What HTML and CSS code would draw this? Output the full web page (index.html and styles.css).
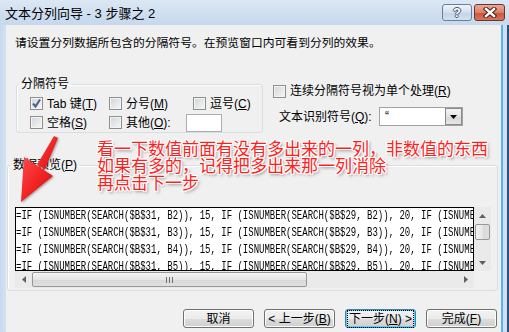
FILE: index.html
```html
<!DOCTYPE html>
<html lang="zh-CN">

<head>
    <meta charset="UTF-8">
    <meta name="viewport" content="width=device-width, initial-scale=1.0">
    <title>文本分列向导 - 3 步骤之 2</title>
    <link rel="stylesheet" href="styles.css">
</head>

<body>
    <div class="window">
        <div class="titlebar">
            <span class="title">文本分列向导 - 3 步骤之 2</span>
            <div class="caps">
                <span class="cap help">?</span>
                <span class="cap close">
                    <svg width="14" height="11" viewBox="0 0 14 11">
                        <path d="M3 2 L11 9 M11 2 L3 9" stroke="#4a1f14" stroke-width="4.4" stroke-linecap="square" />
                        <path d="M3 2 L11 9 M11 2 L3 9" stroke="#fff" stroke-width="2.4" stroke-linecap="square" />
                    </svg>
                </span>
            </div>
        </div>

        <div class="frame">
            <div class="frame-left"></div>
            <div class="client">
                <p class="intro">请设置分列数据所包含的分隔符号。在预览窗口内可看到分列的效果。</p>

                <div class="upper">
                    <fieldset class="group delims">
                        <legend>分隔符号</legend>
                        <div class="rows">
                            <div class="row">
                                <label class="check w1"><span class="box on"><svg width="11" height="11" viewBox="0 0 11 11"><path d="M2 5.5 L4.5 8.5 L9 1.5" fill="none" stroke="#4a5f8a" stroke-width="2" /></svg></span><span>Tab 键(<u>T</u>)</span></label>
                                <label class="check w2"><span class="box"></span><span>分号(<u>M</u>)</span></label>
                                <label class="check"><span class="box"></span><span>逗号(<u>C</u>)</span></label>
                            </div>
                            <div class="row">
                                <label class="check w1"><span class="box"></span><span>空格(<u>S</u>)</span></label>
                                <label class="check w3"><span class="box"></span><span>其他(<u>O</u>):</span></label>
                                <span class="textbox"></span>
                            </div>
                        </div>
                    </fieldset>

                    <div class="options">
                        <label class="check"><span class="box"></span><span>连续分隔符号视为单个处理(<u>R</u>)</span></label>
                        <div class="qualifier">
                            <span class="qlabel">文本识别符号(<u>Q</u>):</span>
                            <div class="combo">
                                <span class="combo-val">“</span>
                                <span class="combo-btn"><svg width="7" height="4" viewBox="0 0 7 4"><path d="M0 0 H7 L3.5 4 Z" fill="#000" /></svg></span>
                            </div>
                        </div>
                    </div>
                </div>

                <fieldset class="group preview">
                    <legend>数据预览(<u>P</u>)</legend>
                    <div class="pv">
                        <div class="data">
                            <div class="lines">
                                <div>=IF (ISNUMBER(SEARCH($B$31, B2)), 15, IF (ISNUMBER(SEARCH($B$29, B2)), 20, IF (ISNUMBER(SEARCH($B$30, B2)), 25</div>
                                <div>=IF (ISNUMBER(SEARCH($B$31, B3)), 15, IF (ISNUMBER(SEARCH($B$29, B3)), 20, IF (ISNUMBER(SEARCH($B$30, B3)), 25</div>
                                <div>=IF (ISNUMBER(SEARCH($B$31, B4)), 15, IF (ISNUMBER(SEARCH($B$29, B4)), 20, IF (ISNUMBER(SEARCH($B$30, B4)), 25</div>
                                <div>=IF (ISNUMBER(SEARCH($B$31, B5)), 15, IF (ISNUMBER(SEARCH($B$29, B5)), 20, IF (ISNUMBER(SEARCH($B$30, B5)), 25</div>
                            </div>
                        </div>
                        <div class="vscroll">
                            <span class="arr"><svg width="7" height="4" viewBox="0 0 7 4"><path d="M0 4 H7 L3.5 0 Z" fill="#606060" /></svg></span>
                            <span class="vthumb"></span>
                            <span class="vtrack"></span>
                            <span class="arr"><svg width="7" height="4" viewBox="0 0 7 4"><path d="M0 0 H7 L3.5 4 Z" fill="#606060" /></svg></span>
                        </div>
                        <div class="hscroll">
                            <span class="arr"><svg width="4" height="7" viewBox="0 0 4 7"><path d="M4 0 V7 L0 3.5 Z" fill="#606060" /></svg></span>
                            <span class="hthumb"><span class="grip"></span></span>
                            <span class="htrack"></span>
                            <span class="arr"><svg width="4" height="7" viewBox="0 0 4 7"><path d="M0 0 V7 L4 3.5 Z" fill="#606060" /></svg></span>
                        </div>
                        <div class="corner"></div>
                    </div>
                </fieldset>

                <div class="buttons">
                    <span class="btn"><span>取消</span></span>
                    <span class="btn"><span>&lt; 上一步(<u>B</u>)</span></span>
                    <span class="btn default"><span class="focus">下一步(<u>N</u>) &gt;</span></span>
                    <span class="btn"><span>完成(<u>F</u>)</span></span>
                </div>
            </div>
            <div class="frame-right"></div>
        </div>

        <!-- annotation drawn over the dialog -->
        <div class="note">看一下数值前面有没有多出来的一列，非数值的东西<br>如果有多的，记得把多出来那一列消除<br>再点击下一步</div>
        <svg class="arrow" width="70" height="80" viewBox="0 0 70 80">
            <defs>
                <linearGradient id="red" x1="0" y1="0" x2="1" y2="1">
                    <stop offset="0" stop-color="#ff4a4a" />
                    <stop offset="1" stop-color="#e30000" />
                </linearGradient>
            </defs>
            <path d="M49 0 L53 2 L40 33 L32 29 Z" fill="url(#red)" />
            <path d="M16 66 L19 21 L48 40 Z" fill="url(#red)" />
        </svg>
    </div>
</body>

</html>
```

FILE: styles.css
```css
* {
    box-sizing: border-box;
}

body {
    margin: 0;
    width: 509px;
    height: 332px;
    overflow: hidden;
    font-family: "Liberation Sans", "Noto Sans CJK SC", sans-serif;
    font-size: 12px;
    color: #000;
}

u {
    text-decoration: underline;
    text-underline-offset: 1px;
}

.window {
    position: relative;
    width: 509px;
    height: 332px;
    display: flex;
    flex-direction: column;
    background: #c9dbef;
}

/* title bar */
.titlebar {
    height: 25px;
    flex: none;
    display: flex;
    justify-content: space-between;
    background: linear-gradient(#dbe7f4, #c6d8ed);
}

.title {
    padding-left: 5px;
    font-size: 13px;
    line-height: 28px;
}

.caps {
    display: flex;
    gap: 2px;
    margin: 4px 4px 0 0;
}

.cap {
    height: 17px;
    display: flex;
    align-items: center;
    justify-content: center;
    border: 1px solid #6b7d98;
    border-radius: 3px;
}

.help {
    width: 30px;
    background: linear-gradient(#eef3f9, #d3dfee 50%, #c3d2e6 51%, #d5e1ef);
    color: #fff;
    font-weight: bold;
    font-size: 13px;
    text-shadow: 1px 0 #43536d, -1px 0 #43536d, 0 1px #43536d, 0 -1px #43536d;
}

.close {
    width: 31px;
    border-color: #6e3428;
    background: linear-gradient(#e9a99a, #d9806b 50%, #c7553c 51%, #d7765d);
}

/* window body */
.frame {
    flex: 1;
    display: flex;
}

.frame-left {
    width: 6px;
    background: linear-gradient(90deg, #c7d9ee, #d3e2f2);
}

.frame-right {
    width: 8px;
    border-left: 2px solid #5fb0ec;
    border-right: 2px solid #2d4f7a;
    background: #cddff2;
}

.client {
    flex: 1;
    background: #f0f0f0;
}

.intro {
    margin: 10px 0 0 9px;
    font-size: 11.8px;
    line-height: 16px;
}

.upper {
    display: flex;
    align-items: flex-start;
    margin-top: 25px;
}

.group {
    margin: 0;
    padding: 0;
    min-width: 0;
    border: 1px solid #d5dfe5;
    border-radius: 3px;
    box-shadow: inset 1px 1px #fff;
}

.group legend {
    padding: 0 2px;
    line-height: 16px;
}

.delims {
    width: 247px;
    margin-left: 10px;
}

.delims legend {
    margin-left: 2px;
}

.rows {
    padding: 2px 0 0 13px;
}

.row {
    display: flex;
    align-items: center;
    height: 19px;
}

.check {
    display: flex;
    align-items: center;
    gap: 4px;
    line-height: 16px;
}

.w1 {
    width: 79px;
}

.w2 {
    width: 84px;
}

.w3 {
    width: 77px;
}

.box {
    width: 13px;
    height: 13px;
    flex: none;
    display: flex;
    align-items: center;
    justify-content: center;
    border: 1px solid #8e8f8f;
    background: linear-gradient(135deg, #d2d4d8, #f7f7f7);
    box-shadow: inset 0 0 0 1px #f4f4f4;
}

.textbox {
    width: 36px;
    height: 18px;
    border: 1px solid #abadb3;
    background: #fff;
}

.options {
    margin: 7px 0 0 10px;
}

.qualifier {
    display: flex;
    align-items: center;
    margin-top: 8px;
    padding-left: 6px;
}

.qlabel {
    width: 100px;
    line-height: 16px;
}

.combo {
    width: 84px;
    height: 19px;
    display: flex;
    border: 1px solid #a2a2a2;
    background: #fff;
}

.combo-val {
    flex: 1;
    padding-left: 5px;
    line-height: 17px;
}

.combo-btn {
    width: 17px;
    display: flex;
    align-items: center;
    justify-content: center;
    border: 1px solid #8a8a8a;
    background: linear-gradient(#f4f4f4, #e4e4e4 50%, #d6d6d6 51%, #e6e6e6);
}

/* data preview */
.preview {
    width: 491px;
    margin: 24px 0 0 1px;
}

.preview legend {
    margin-left: 3px;
}

.pv {
    display: grid;
    grid-template-columns: 459px 17px;
    grid-template-rows: 64px 17px;
    margin: 34px 0 2px 7px;
}

.data {
    border: 1px solid #000;
    background: #fff;
    overflow: hidden;
}

.lines {
    width: 800px;
    font-family: "Liberation Mono", monospace;
    font-size: 12px;
    line-height: 17px;
    transform: scaleX(0.75);
    transform-origin: 0 0;
}

.lines div {
    white-space: pre;
}

.vscroll {
    display: flex;
    flex-direction: column;
    align-items: center;
    background: #eaeaea;
}

.hscroll {
    display: flex;
    align-items: center;
    background: #eaeaea;
}

.arr {
    flex: none;
    width: 17px;
    height: 17px;
    display: flex;
    align-items: center;
    justify-content: center;
}

.vthumb {
    width: 15px;
    height: 16px;
    border: 1px solid #979797;
    border-radius: 2px;
    background: linear-gradient(90deg, #f3f3f3, #e6e6e6 50%, #d8d8d8 51%, #e0e0e0);
}

.vtrack,
.htrack {
    flex: 1;
}

.hthumb {
    width: 275px;
    height: 15px;
    display: flex;
    align-items: center;
    justify-content: center;
    border: 1px solid #979797;
    border-radius: 2px;
    background: linear-gradient(#f3f3f3, #e6e6e6 50%, #d8d8d8 51%, #e0e0e0);
}

.grip {
    width: 7px;
    height: 6px;
    background: repeating-linear-gradient(90deg, #707070 0 1px, transparent 1px 3px);
}

.corner {
    background: #f0f0f0;
}

/* buttons */
.buttons {
    display: flex;
    justify-content: flex-end;
    gap: 10px;
    margin-top: 18px;
    padding-right: 4px;
}

.btn {
    width: 71px;
    height: 19px;
    display: flex;
    align-items: center;
    justify-content: center;
    border: 1px solid #707070;
    border-radius: 3px;
    background: linear-gradient(#f2f2f2, #ebebeb 50%, #dddddd 51%, #cfcfcf);
    box-shadow: inset 0 0 0 1px #fcfcfc;
    line-height: 16px;
}

.default {
    border-color: #3c7fb1;
    box-shadow: inset 0 0 0 1px #48d8fb;
}

.focus {
    padding: 0 1px;
    outline: 1px dotted #000;
    outline-offset: 0;
}

/* annotation */
.note {
    position: absolute;
    left: 97px;
    top: 139px;
    font-family: "Noto Sans CJK SC", sans-serif;
    font-size: 17px;
    line-height: 17px;
    color: #ff1e1e;
    white-space: nowrap;
    text-shadow: 1px 0 #fff, -1px 0 #fff, 0 1px #fff, 0 -1px #fff,
        1px 1px #fff, -1px -1px #fff, 1px -1px #fff, -1px 1px #fff,
        2px 2px 3px rgba(0, 0, 0, 0.45);
}

.arrow {
    position: absolute;
    left: 5px;
    top: 136px;
    filter: drop-shadow(1px 1px 1px rgba(0, 0, 0, 0.35));
}
```
